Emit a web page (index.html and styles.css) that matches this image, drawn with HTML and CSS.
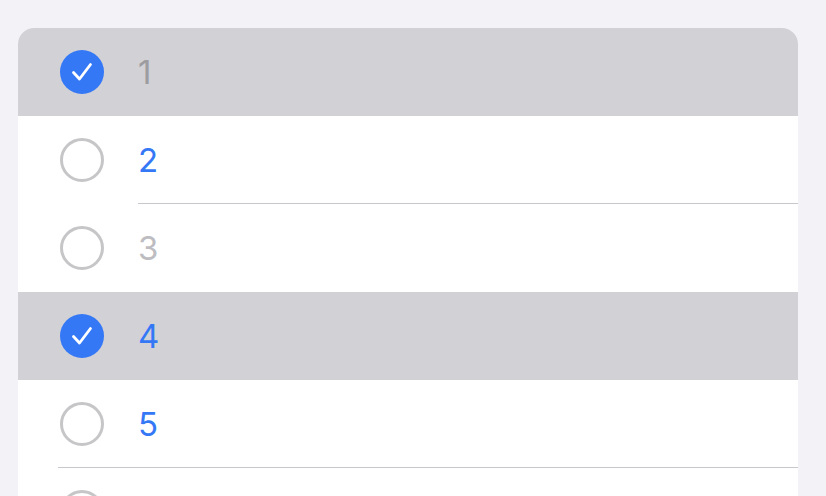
FILE: index.html
```html
<!DOCTYPE html>
<html>
<head>
<meta charset="utf-8">
<link rel="stylesheet" href="styles.css">
</head>
<body>
<div class="list">
  <div class="row selected">
    <span class="check on"><svg viewBox="0 0 44 44" width="44" height="44"><circle cx="22" cy="22" r="22" fill="#3478f6"/><path d="M13.5 22.5 L19.5 29 L30.5 14.5" fill="none" stroke="#fff" stroke-width="2.8" stroke-linecap="round" stroke-linejoin="round"/></svg></span>
    <span class="label dim">1</span>
  </div>
  <div class="row">
    <span class="check"><svg viewBox="0 0 44 44" width="44" height="44"><circle cx="22" cy="22" r="20.5" fill="none" stroke="#c6c6c8" stroke-width="3"/></svg></span>
    <span class="label blue">2</span>
    <span class="sep inset"></span>
  </div>
  <div class="row">
    <span class="check"><svg viewBox="0 0 44 44" width="44" height="44"><circle cx="22" cy="22" r="20.5" fill="none" stroke="#c6c6c8" stroke-width="3"/></svg></span>
    <span class="label faint">3</span>
  </div>
  <div class="row selected">
    <span class="check on"><svg viewBox="0 0 44 44" width="44" height="44"><circle cx="22" cy="22" r="22" fill="#3478f6"/><path d="M13.5 22.5 L19.5 29 L30.5 14.5" fill="none" stroke="#fff" stroke-width="2.8" stroke-linecap="round" stroke-linejoin="round"/></svg></span>
    <span class="label blue">4</span>
  </div>
  <div class="row">
    <span class="check"><svg viewBox="0 0 44 44" width="44" height="44"><circle cx="22" cy="22" r="20.5" fill="none" stroke="#c6c6c8" stroke-width="3"/></svg></span>
    <span class="label blue">5</span>
    <span class="sep full"></span>
  </div>
  <div class="row">
    <span class="check"><svg viewBox="0 0 44 44" width="44" height="44"><circle cx="22" cy="22" r="20.5" fill="none" stroke="#c6c6c8" stroke-width="3"/></svg></span>
  </div>
</div>
</body>
</html>
```
FILE: styles.css
```css
html, body {
  margin: 0;
  padding: 0;
  background: #f2f2f7;
  overflow: hidden;
  height: 496px;
}
body {
  font-family: Inter, "Noto Sans", sans-serif;
}
.list {
  margin: 28px 28px 0 18px;
  background: #ffffff;
  border-radius: 16px 16px 0 0;
  overflow: hidden;
}
.row {
  position: relative;
  height: 88px;
  display: flex;
  align-items: center;
  background: #ffffff;
}
.row.selected {
  background: #d1d1d6;
}
.check {
  width: 44px;
  height: 44px;
  margin-left: 42px;
  display: flex;
}
.label {
  margin-left: 34px;
  font-size: 33px;
  line-height: 1;
  font-weight: 400;
}
.blue { color: #3478f6; }
.dim { color: #9c9ca1; }
.faint { color: #bdbdc1; }
.sep {
  position: absolute;
  right: 0;
  bottom: 0;
  height: 1px;
  background: #c8c7cc;
}
.sep.inset { left: 120px; }
.sep.full { left: 40px; }
```
